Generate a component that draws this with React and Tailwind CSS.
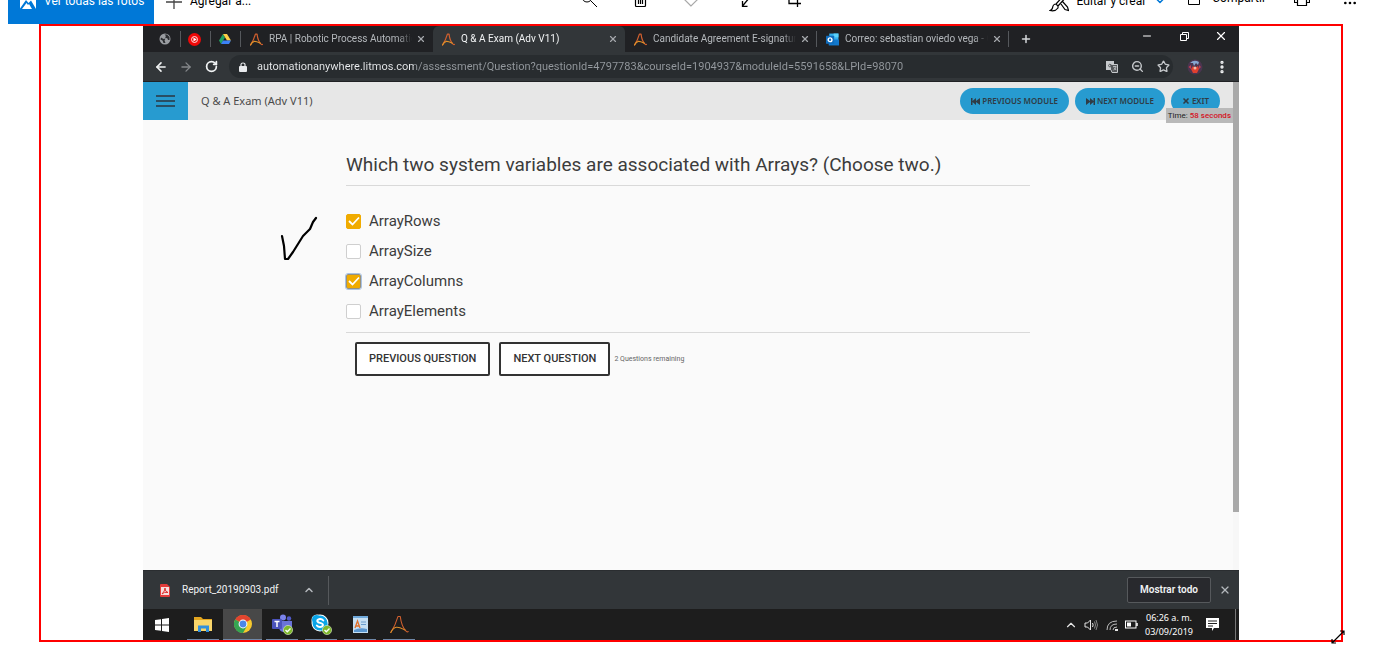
import React from "react";
import { ArrowLeft, ArrowRight, RotateCw, Star, X, Plus, Minus, ChevronUp, ChevronDown, ZoomOut, EllipsisVertical, Ellipsis } from "lucide-react";

function AnywhereLogo({ className, thin }) {
  const width = thin ? 1.3 : 2.2;
  return (
    <svg viewBox="0 0 24 24" className={className} fill="none" strokeLinecap="round" strokeLinejoin="round" aria-hidden="true">
      <path d="M1 22C5 16 8 9 10 2H13C14 10 16 16 20 20Q22 22 23 21" stroke="#d2602f" strokeWidth={width} />
      <path d="M1 22C3 18 5 16 8 15.500C12 15 15 17 19 19" stroke="#e0912a" strokeWidth={width} />
    </svg>
  );
}

function GlobeIcon() {
  return (
    <svg viewBox="0 0 24 24" className="size-3" aria-hidden="true">
      <circle cx="12" cy="12" r="11" fill="#9a9da1" />
      <path d="M4 9 L9 12 L13 11 L11 15 L13 20 L9 20 L7 15 L3 13Z M11 3 L14 6 L12 9 L17 11 L18 14 L21 14 L21 8 L16 3Z" fill="#2b2d30" />
    </svg>
  );
}

function MusicIcon() {
  return (
    <svg viewBox="0 0 24 24" className="size-[13px]" aria-hidden="true">
      <circle cx="12" cy="12" r="12" fill="#f00808" />
      <circle cx="12" cy="12" r="5.500" fill="none" stroke="#fff" strokeWidth="1.6" />
      <path d="M10 8.500 L16 12 L10 15.500Z" fill="#fff" />
    </svg>
  );
}

function DriveIcon() {
  return (
    <svg viewBox="0 0 24 22" className="size-3" aria-hidden="true">
      <path d="M8 1 L12 8 L4 21 L0 14Z" fill="#1fa463" />
      <path d="M8 1 L16 1 L24 14 L16 14Z" fill="#ffcf48" />
      <path d="M8 14 L24 14 L20 21 L4 21Z" fill="#3b82f6" />
    </svg>
  );
}

function OutlookIcon() {
  return (
    <svg viewBox="0 0 24 24" className="size-[13px] shrink-0" aria-hidden="true">
      <rect x="6" y="1" width="17" height="13" fill="#32b0ee" />
      <rect x="14" y="1" width="9" height="7" fill="#5bd2fb" />
      <path d="M5 12 L24 12 L24 23 L5 23Z" fill="#1278cc" />
      <rect x="0" y="5" width="15" height="15" rx="1" fill="#0f6cbd" />
      <circle cx="7.500" cy="12.500" r="3.500" fill="none" stroke="#fff" strokeWidth="2.600" />
    </svg>
  );
}

function PinnedTab({ label, children }) {
  return (
    <button aria-label={label} className="flex h-4 w-[30px] shrink-0 items-center justify-center border-r border-[#55585c] pr-0.5">
      {children}
    </button>
  );
}

function Tab({ title, icon, active, divider }) {
  return (
    <div className={active ? "flex h-full w-48 min-w-0 items-center rounded-t-md bg-[#323639]" : "flex h-full w-48 min-w-0 items-center"}>
      <button className="flex min-w-0 flex-1 items-center gap-1.5 pl-[9px]">
        {icon}
        <span className={"flex-1 overflow-hidden text-left text-[10px] leading-4 whitespace-nowrap [mask-image:linear-gradient(90deg,#000_90%,transparent)] " + (active ? "text-[#f1f3f4]" : "text-[#b4b8bc]")}>
          {title}
        </span>
      </button>
      <button aria-label="Cerrar pestaña" className="flex w-5 justify-center pr-0.5 text-[#a5a8ac]">
        <X className="size-2.5" strokeWidth={2.8} />
      </button>
      <span className={divider ? "h-4 w-px bg-[#55585c]" : "h-4 w-px"} />
    </div>
  );
}

function PhotoToolbar() {
  const stroke = { fill: "none", stroke: "currentColor", strokeWidth: 1 };
  return (
    <header className="flex h-6 items-end overflow-hidden bg-white pl-2 text-xs text-black">
      <div className="flex h-[46px] w-full shrink-0 items-stretch">
        <button className="flex w-[146px] items-center gap-2 bg-[#0078d7] pl-3 whitespace-nowrap text-white">
          <svg viewBox="0 0 16 16" className="size-4" aria-hidden="true">
            <path d="M0 0H16V16L11 7.500L8.500 10L6 7L0 15.500Z" fill="#fff" />
            <path d="M2 16L6.500 10L8 12L9 11L12 16Z" fill="#fff" />
          </svg>
          Ver todas las fotos
        </button>
        <button className="flex items-center gap-2 pl-3 whitespace-nowrap">
          <svg viewBox="0 0 16 16" className="size-4" fill="none" stroke="#444" strokeWidth="1.300" aria-hidden="true"><path d="M8 0V16M0 9H16" /></svg>
          Agregar a...
        </button>
        <div className="flex flex-1 items-center justify-center pb-1 pl-[82px]">
          <button aria-label="Zoom" className="flex w-[51px] justify-center">
            <svg viewBox="0 0 16 16" className="size-4" {...stroke}><circle cx="6" cy="6" r="5" /><path d="M9.500 9.500L16 16" /></svg>
          </button>
          <button aria-label="Eliminar" className="flex w-[51px] justify-center">
            <svg viewBox="0 0 16 16" className="size-4" {...stroke} strokeWidth="1.200"><path d="M1 3.500H15M5.500 3V1H10.500V3M3.500 3.500V14.500Q3.500 15.500 4.500 15.500H12.500Q13.500 15.500 13.500 14.500V3.500M6.500 6V13M8.500 6V13M10.500 6V13" /></svg>
          </button>
          <button aria-label="Favorito" className="flex w-[51px] justify-center text-[#a9a9a9]">
            <svg viewBox="0 0 16 16" className="size-4" {...stroke} strokeWidth="1.200"><path d="M8 15L1 8Q-.5 3 4 2Q7 2 8 4.500Q9 2 12 2Q16.500 3 15 8Z" /></svg>
          </button>
          <button aria-label="Girar" className="flex w-[51px] justify-center">
            <svg viewBox="0 0 16 16" className="size-4" {...stroke} strokeWidth="1.300"><path d="M8.500 10V15.300H13.500M8.500 15L16 6" /></svg>
          </button>
          <button aria-label="Recortar" className="flex w-[51px] justify-center">
            <svg viewBox="0 0 16 16" className="size-4" {...stroke} strokeWidth="1.300"><path d="M4 0V12.500H16M1 3.500H12.500V16" /></svg>
          </button>
        </div>
        <button className="flex items-center gap-2 whitespace-nowrap">
          <svg viewBox="0 0 20 22" className="h-[22px] w-5" {...stroke} strokeWidth="1.200">
            <path d="M17 3L7 14M19 5L9 16M7 14Q4 14 3.500 18Q3 20 1 20.500Q6 22 9 18V16ZM3 3L8.500 9.500M12 14L16 19.500L19.500 20.500L18.500 17L13.500 11.500" />
          </svg>
          Editar y crear
          <ChevronDown className="size-3 text-[#0078d7]" strokeWidth={3} />
        </button>
        <button className="flex items-center gap-2.5 pb-1.5 pl-5 whitespace-nowrap">
          <svg viewBox="0 0 16 16" className="size-4" {...stroke}><path d="M2.500 6V14.500H13.500V9M6 10Q7 5 14 4M11 1L14 4L11 7" /></svg>
          Compartir
        </button>
        <button aria-label="Imprimir" className="ml-7 flex items-center pb-1">
          <svg viewBox="0 0 16 16" className="size-4" {...stroke} strokeWidth="1.200"><path d="M3.500 11.500H.5V4.500H15.500V11.500H12.500M3.500 4V.5H12.500V4M3.500 8.500H12.500V14.500H3.500Z" /></svg>
        </button>
        <button aria-label="Más" className="mr-6 ml-8 flex items-center pt-1">
          <Ellipsis className="size-4" strokeWidth={2} />
        </button>
      </div>
    </header>
  );
}

function BrowserChrome() {
  return (
    <div className="bg-[#202124]">
      <div className="flex h-[26px] items-center pl-2">
        <PinnedTab label="Web"><GlobeIcon /></PinnedTab>
        <PinnedTab label="Música"><MusicIcon /></PinnedTab>
        <PinnedTab label="Drive"><DriveIcon /></PinnedTab>
        <Tab title="RPA | Robotic Process Automation" icon={<AnywhereLogo className="size-[13px] shrink-0" />} />
        <Tab active title="Q & A Exam (Adv V11)" icon={<AnywhereLogo className="size-[13px] shrink-0" />} />
        <Tab divider title="Candidate Agreement E-signature" icon={<AnywhereLogo className="size-[13px] shrink-0" />} />
        <Tab divider title="Correo: sebastian oviedo vega - Outlook" icon={<OutlookIcon />} />
        <button aria-label="Nueva pestaña" className="ml-[11px] text-[#d5d7da]"><Plus className="size-3" strokeWidth={3} /></button>
        <div className="ml-auto flex h-full items-center pb-1.5 text-white">
          <button aria-label="Minimizar" className="flex w-[37px] justify-center"><Minus className="size-3" strokeWidth={2} /></button>
          <button aria-label="Restaurar" className="flex w-[37px] justify-center">
            <svg viewBox="0 0 10 10" className="size-2.5" fill="none" stroke="#fff"><path d="M1.500 3.500H7.500V9.500H1.500ZM3.500 3V1.500H9.500V7.500H8" /></svg>
          </button>
          <button aria-label="Cerrar" className="flex w-[37px] justify-center"><X className="size-3.5" strokeWidth={2} /></button>
        </div>
      </div>
      <div className="flex h-[30px] items-center border-b border-[#202124] bg-[#323639] pl-[11px] text-[#f1f3f4]">
        <button aria-label="Atrás"><ArrowLeft className="size-3.5" strokeWidth={2.8} /></button>
        <button aria-label="Adelante" className="ml-[11px] text-[#85888b]"><ArrowRight className="size-3.5" strokeWidth={2.2} /></button>
        <button aria-label="Recargar" className="mr-[11px] ml-3"><RotateCw className="size-[13px]" strokeWidth={3.2} /></button>
        <div className="flex h-[23px] flex-1 items-center rounded-full bg-[#282c2f] pr-[3px] pl-[10px]">
          <svg viewBox="0 0 8 10" className="h-2.5 w-2" aria-hidden="true">
            <rect x="0" y="4" width="8" height="6" rx="1" fill="#e8eaed" />
            <path d="M2 4V2.500Q2 1 4 1Q6 1 6 2.500V4" fill="none" stroke="#e8eaed" strokeWidth="1.200" />
          </svg>
          <input
            aria-label="Dirección"
            className="ml-[10px] min-w-0 flex-1 bg-[linear-gradient(90deg,#eceef0_157px,#959a9f_157px)] bg-clip-text text-[11px] leading-4 text-transparent outline-none"
            defaultValue="automationanywhere.litmos.com/assessment/Question?questionId=4797783&courseId=1904937&moduleId=5591658&LPId=98070"
          />
          <div className="flex items-center gap-[13px] text-[#c6c9cc]">
            <button aria-label="Traducir">
              <svg viewBox="0 0 12 12" className="size-3">
                <rect width="8" height="9" fill="#c6c9cc" />
                <path d="M5 3.500H11.500V11.500H6L5 9" fill="#55585b" stroke="#c6c9cc" />
                <path d="M5.500 4Q3 2 2.500 4.500Q3 7 5.500 5.500V4.800H4" fill="none" stroke="#55585b" />
                <path d="M7 5.500H10.500M9 5V6M10 6Q9 8.500 7.500 9M8 6.500L10 9" fill="none" stroke="#c6c9cc" strokeWidth=".8" />
              </svg>
            </button>
            <button aria-label="Reducir"><ZoomOut className="size-[13px]" strokeWidth={2.6} /></button>
            <button aria-label="Marcador"><Star className="size-[13px]" strokeWidth={2.4} /></button>
          </div>
        </div>
        <button aria-label="Perfil" className="ml-[14px]">
          <svg viewBox="0 0 16 16" className="size-4">
            <circle cx="8" cy="8" r="7.500" fill="#4b3550" />
            <path d="M3 4Q7 0 12 3L11 6L9 4L7 7L6 4Z" fill="#86a5cf" />
            <path d="M4 10L6 7L8 9L11 7L12 10L10 14L6 14Z" fill="#e0402f" />
            <circle cx="8" cy="9" r="1.500" fill="#f3b9a5" />
            <path d="M1.500 8L4 6L4 10ZM12 6L14 8L12 10Z" fill="#c23b52" />
          </svg>
        </button>
        <button aria-label="Menú" className="mr-[9px] ml-[11px]"><EllipsisVertical className="size-4" strokeWidth={3} /></button>
      </div>
    </div>
  );
}

const pill = "flex h-[26px] items-center gap-0.5 rounded-full bg-[#279bd0] px-[11px] text-[8px] leading-4 font-semibold whitespace-nowrap text-[#2f3c46]";

function ExamHeader() {
  return (
    <div className="relative flex h-[38px] items-center bg-[#e7e7e7] font-['Noto_Sans',sans-serif]">
      <button aria-label="Contenido" className="flex h-full w-[45px] items-center justify-center bg-[#279bd0]">
        <svg viewBox="0 0 19 14" className="h-3.5 w-[19px]" aria-hidden="true"><path d="M0 2H19M0 7H19M0 12H19" stroke="#2b3640" strokeWidth="1.600" /></svg>
      </button>
      <h1 className="ml-[13px] text-[11px] leading-4 text-[#4a4a4a]">Q &amp; A Exam (Adv V11)</h1>
      <div className="mr-[13px] ml-auto flex items-center gap-1.5">
        <button className={pill}>
          <svg viewBox="0 0 9 7" className="h-[7px] w-[9px]" fill="#2f3c46"><path d="M0 0H1.500V3L5 0V3L9 0V7L5 4V7L1.500 4V7H0Z" /></svg>
          PREVIOUS MODULE
        </button>
        <button className={pill}>
          <svg viewBox="0 0 9 7" className="h-[7px] w-[9px]" fill="#2f3c46"><path d="M9 0H7.500V3L4 0V3L0 0V7L4 4V7L7.500 4V7H9Z" /></svg>
          NEXT MODULE
        </button>
        <button className={pill}>
          <X className="size-2" strokeWidth={5} />
          EXIT
        </button>
      </div>
      <div className="absolute top-[26px] right-0 bg-[#b9b9b9] px-0.5 font-[Roboto,sans-serif] text-[8px] leading-[15px] whitespace-nowrap text-[#222]">
        Time: <span className="font-medium text-[#d5121e]">58 seconds</span>
      </div>
    </div>
  );
}

function Option({ id, label, checked, focused }) {
  return (
    <li className="flex h-[30px] items-center gap-2">
      <span className="grid size-[15px] place-items-center">
        <input
          id={id}
          type="checkbox"
          defaultChecked={checked}
          className={"peer col-start-1 row-start-1 size-[15px] appearance-none rounded-xs border bg-white checked:bg-[#f0ab00] " + (focused ? "border-[#98917a] outline outline-[#a9c3e6]" : "border-[#cfcfcf] checked:border-[#f0ab00]")}
        />
        <svg viewBox="0 0 12 10" className="pointer-events-none invisible col-start-1 row-start-1 h-2.5 w-3 peer-checked:visible" fill="none" stroke="#fff" strokeWidth="1.800"><path d="M1 5L4.500 8.500L11 1.500" /></svg>
      </span>
      <label htmlFor={id} className="text-[15px] leading-5 text-[#3c3c3c]">{label}</label>
    </li>
  );
}

const outlined = "h-[34px] rounded-xs border-2 border-[#333] bg-white px-3 text-[11px] leading-4 font-medium whitespace-nowrap text-[#333]";

function Exam() {
  return (
    <div className="flex min-h-[488px] bg-[#fafafa]">
      <div className="min-w-0 flex-1">
        <ExamHeader />
        <main className="relative px-[203px] pt-[33px]">
          <svg viewBox="0 0 38 46" className="absolute top-24 left-[137px] h-[46px] w-[38px]" fill="none" stroke="#000" strokeWidth="2.200" strokeLinecap="round" strokeLinejoin="round" aria-hidden="true">
            <path d="M2 20L4 30L5 43L8 43L13 36L23 20L30 13L33 6L36 2" />
          </svg>
          <h2 className="border-b border-[#d9d9d9] pb-2 text-[19px] leading-6 text-[#3c3c3c]">
            Which two system variables are associated with Arrays? (Choose two.)
          </h2>
          <ul className="border-b border-[#d9d9d9] pt-5 pb-1.5">
            <Option id="rows" label="ArrayRows" checked />
            <Option id="size" label="ArraySize" />
            <Option id="columns" label="ArrayColumns" checked focused />
            <Option id="elements" label="ArrayElements" />
          </ul>
          <div className="flex items-center pt-[9px] pl-[9px]">
            <button className={outlined}>PREVIOUS QUESTION</button>
            <button className={outlined + " ml-[9px]"}>NEXT QUESTION</button>
            <span className="ml-1 text-[7px] leading-4 text-[#666]">2 Questions remaining</span>
          </div>
        </main>
      </div>
      <div className="w-1.5 bg-[#f7f7f7]"><div className="h-[430px] bg-[#a9a9a9]" /></div>
    </div>
  );
}

function Downloads() {
  return (
    <div className="flex h-[39px] items-center border-t border-[#2a2d30] bg-[#323639] pl-[17px] text-[#f1f3f4]">
      <button className="flex items-center gap-3 text-[10px] leading-4">
        <svg viewBox="0 0 10 13" className="h-[13px] w-2.5" aria-hidden="true">
          <path d="M1 0H7L10 3V12Q10 13 9 13H1Q0 13 0 12V1Q0 0 1 0Z" fill="#e23b3b" />
          <rect x="1" y="3" width="8" height="8" fill="#f6dede" />
          <path d="M2 10Q5 7 5 4Q5 8 8 8.500Q4 7.500 2 10Z" fill="none" stroke="#d22" strokeWidth=".9" />
        </svg>
        Report_20190903.pdf
      </button>
      <button aria-label="Opciones" className="ml-6 text-[#b4b8bc]"><ChevronUp className="size-3" strokeWidth={3} /></button>
      <span className="ml-[13px] h-[29px] w-px bg-[#56595c]" />
      <button className="ml-auto h-[26px] rounded-xs border border-[#56595c] bg-[#28292d] px-3 text-[10px] leading-4 font-semibold">Mostrar todo</button>
      <button aria-label="Cerrar descargas" className="mr-2 ml-2 text-[#b4b8bc]"><X className="size-3" strokeWidth={2.4} /></button>
    </div>
  );
}

function TaskItem({ label, active, children }) {
  return (
    <button aria-label={label} className={"flex h-full items-center justify-center border-b border-[#6f88a8] " + (active ? "-mx-[3px] w-[39px] bg-[#484848]" : "w-8")}>
      {children}
    </button>
  );
}

function Badge() {
  return (
    <g>
      <circle cx="16" cy="16" r="4.600" fill="#7eb82c" stroke="#dfeccb" strokeWidth=".6" />
      <path d="M13.500 16L15.300 17.800L18.500 14.500" fill="none" stroke="#fff" strokeWidth="1.300" />
    </g>
  );
}

function Taskbar() {
  return (
    <footer className="flex h-[31px] items-center bg-[#1d1d1d] pl-3 text-white">
      <button aria-label="Inicio" className="mr-[18px]">
        <svg viewBox="0 0 14 14" className="size-3.5" fill="#fff"><path d="M0 2L6 1.200V6.500H0ZM7 1L14 0V6.500H7ZM0 7.500H6V12.800L0 12ZM7 7.500H14V14L7 13Z" /></svg>
      </button>
      <div className="flex h-full items-center gap-[7px]">
        <TaskItem label="Explorador">
          <svg viewBox="0 0 18 16" className="h-4 w-[18px]"><path d="M0 1H7L9 3H18V14H0Z" fill="#e2a51f" /><path d="M0 4H18V15H0Z" fill="#f9d66b" /><path d="M4 16V9.500H15V16H12V12.500H7V16Z" fill="#3290dc" /></svg>
        </TaskItem>
        <TaskItem label="Chrome" active>
          <svg viewBox="0 0 18 18" className="size-[18px]">
            <circle cx="9" cy="9" r="9" fill="#f7c92e" />
            <path d="M9 9L1.200 4.500A9 9 0 0 1 16.800 4.500Z" fill="#e2442f" />
            <path d="M9 9L1.200 4.500A9 9 0 0 0 9 18L13 11Z" fill="#35a552" />
            <circle cx="9" cy="9" r="4.400" fill="#fff" /><circle cx="9" cy="9" r="3.400" fill="#4a86e8" />
          </svg>
        </TaskItem>
        <TaskItem label="Teams">
          <svg viewBox="0 0 21 21" className="size-[21px]">
            <circle cx="11" cy="3.500" r="3" fill="#7b83eb" /><circle cx="17" cy="4.500" r="2.200" fill="#5059c9" />
            <path d="M7 7H20V14Q18 18 12 18Q8 18 7 14Z" fill="#6a73d8" />
            <rect x="0" y="5" width="10" height="10" rx="1" fill="#4b53bc" />
            <path d="M2.500 7.500H7.500M5 7.500V13" stroke="#fff" strokeWidth="1.500" />
            <Badge />
          </svg>
        </TaskItem>
        <TaskItem label="Skype">
          <svg viewBox="0 0 21 21" className="size-[21px]">
            <circle cx="6" cy="6" r="5.500" fill="#fff" /><circle cx="9" cy="9" r="8.500" fill="#fff" />
            <circle cx="5.500" cy="5.500" r="4.500" fill="#0aa5e8" /><circle cx="9" cy="9" r="7.500" fill="#0aa5e8" /><circle cx="12.500" cy="12.500" r="4.500" fill="#0aa5e8" />
            <path d="M12.300 6.500Q11 4.800 8.800 5Q6 5.500 6.300 7.200Q7 8.500 9 8.900Q12 9.500 12 11Q11.500 13 9 13Q6.800 13 5.800 11.500" fill="none" stroke="#fff" strokeWidth="1.900" strokeLinecap="round" />
            <Badge />
          </svg>
        </TaskItem>
        <TaskItem label="WordPad">
          <svg viewBox="0 0 15 17" className="h-[17px] w-[15px]"><rect width="15" height="17" fill="#c5dff3" /><rect width="15" height="2" fill="#6fa8da" /><path d="M2 12L4.500 5L7 12M3 10H6" fill="none" stroke="#e0702b" strokeWidth="1.300" /><path d="M8 6H13M8 8.500H13" stroke="#6a9ccd" /><path d="M1 14Q7 11 14 13V16H1Z" fill="#5b97d0" /></svg>
        </TaskItem>
        <TaskItem label="Automation Anywhere"><AnywhereLogo thin className="size-[19px]" /></TaskItem>
      </div>
      <div className="ml-auto flex items-center text-[#e6e6e6]">
        <ChevronUp className="size-3.5" strokeWidth={2} />
        <svg viewBox="0 0 14 12" className="ml-[6px] h-3 w-3.5" fill="none" stroke="currentColor"><path d="M1 4H3.500L6.500 1V11L3.500 8H1ZM8.500 4Q9.800 6 8.500 8" /><path d="M10.500 2.500Q12.500 6 10.500 9.500M12 1Q15 6 12 11" stroke="#888" /></svg>
        <svg viewBox="0 0 12 12" className="ml-2 size-3" fill="none" stroke="currentColor"><path d="M1 11Q1 2 11 2M4 11Q4 5 11 5M7 11Q7 8 11 8" stroke="#bdbdbd" /><path d="M9 11H11V10" strokeWidth="2" /></svg>
        <svg viewBox="0 0 13 9" className="ml-[7px] h-[9px] w-[13px]"><rect x=".5" y="1" width="10.500" height="7" fill="none" stroke="#fff" /><rect x="2" y="2.500" width="4" height="4" fill="#fff" /><path d="M12 3V6" stroke="#fff" strokeWidth="1.500" /></svg>
        <div className="ml-[7px] flex w-12 flex-col items-center font-['Noto_Sans',sans-serif] text-[9px] leading-[14px] whitespace-nowrap text-white">
          <span>06:26 a. m.</span>
          <span>03/09/2019</span>
        </div>
        <svg viewBox="0 0 13 13" className="ml-[13px] size-[13px]"><path d="M0 0H13V10H8L6 13V10H0Z" fill="#fff" /><path d="M2 3H11M2 5.500H11M2 8H7" stroke="#222" /></svg>
        <span className="mr-[3px] ml-4 h-[31px] w-px bg-[#777]" />
      </div>
    </footer>
  );
}

export default function App() {
  return (
    <div className="min-h-screen bg-white font-[Roboto,sans-serif]">
      <PhotoToolbar />
      <section className="relative mx-[39px] border-2 border-[#ff0000] px-[102px]">
        <BrowserChrome />
        <Exam />
        <Downloads />
        <Taskbar />
        <svg viewBox="0 0 14 14" className="absolute -right-1 -bottom-1 size-3.5" fill="none" stroke="#000" strokeWidth="1.200" aria-hidden="true">
          <path d="M1 13L13 1M9 1H13V5M1 9V13H5" />
        </svg>
      </section>
    </div>
  );
}
